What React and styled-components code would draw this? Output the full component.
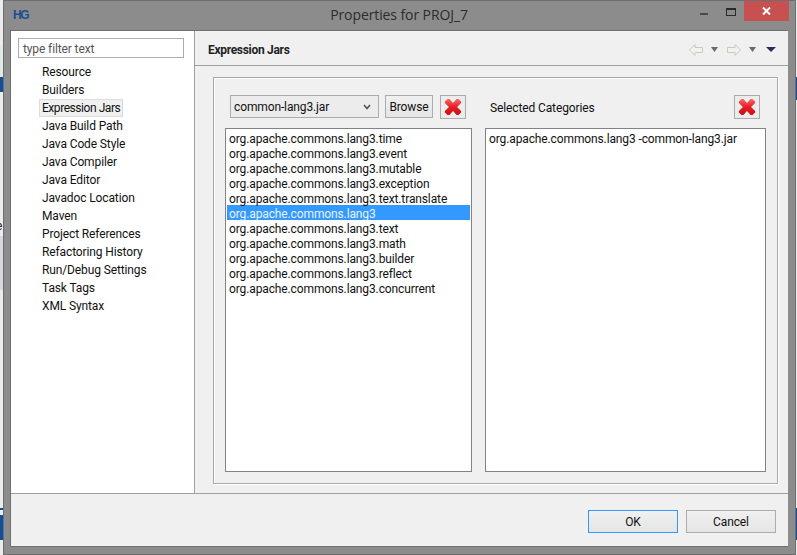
import React from 'react'
import styled, { createGlobalStyle } from 'styled-components'

const GlobalStyle = createGlobalStyle`
  html, body { margin: 0; padding: 0; background: #fff; overflow: hidden; }
  * { box-sizing: border-box; }
`

const Desktop = styled.div`
  position: relative;
  width: 797px;
  height: 555px;
  padding-left: 3px;
  padding-right: 1px;
  background: #ececec;
  font-family: Roboto, "Open Sans", sans-serif;
  font-size: 12px;
  letter-spacing: -0.12px;
  color: #111;
`

const Sliver = styled.div`
  position: absolute;
  left: ${({ $right }) => ($right ? '796px' : '0')};
  top: ${({ $top }) => $top}px;
  width: ${({ $right }) => ($right ? '1px' : '3px')};
  height: ${({ $h }) => $h}px;
  background: ${({ $color }) => $color || '#0f4f9e'};
`

const ClippedChar = styled.span`
  position: absolute;
  left: -4px;
  top: 219px;
  color: #222;
`

const Win = styled.div`
  position: relative;
  height: 555px;
  display: flex;
  flex-direction: column;
  background: #8c8c8c;
  border: 1px solid #6e6e6e;
  padding: 0 7px 7px 6px;
`

const TitleBar = styled.div`
  position: relative;
  height: 29px;
  flex: none;
  display: flex;
  align-items: center;
  justify-content: center;
`

const Logo = styled.span`
  position: absolute;
  left: 3px;
  top: 7px;
  font-family: "Liberation Sans", sans-serif;
  font-size: 12px;
  font-weight: 700;
  letter-spacing: -1.5px;
  color: #1a4f8f;
`

const Title = styled.span`
  font-family: "Open Sans", sans-serif;
  font-size: 14px;
  letter-spacing: -0.1px;
  color: #2c2c2c;
  margin-bottom: 2px;
`

const Controls = styled.div`
  position: absolute;
  right: -1px;
  top: 0;
  display: flex;
  align-items: flex-start;
`

const MinIcon = styled.div`
  width: 8px;
  height: 2px;
  margin-top: 12px;
  margin-right: 18px;
  background: #4a4a4a;
`

const MaxIcon = styled.div`
  width: 10px;
  height: 8px;
  margin-top: 7px;
  margin-right: 8px;
  border: 1px solid #2a2a2a;
  border-top-width: 2px;
`

const CloseBtn = styled.div`
  width: 45px;
  height: 20px;
  background: #c75050;
  display: flex;
  align-items: center;
  justify-content: center;
`

const Client = styled.div`
  flex: 1;
  display: flex;
  flex-direction: column;
  background: #f0f0f0;
  border: 1px solid #6f6f6f;
  border-width: 1px 0 1px 1px;
  min-height: 0;
`

const Main = styled.div`
  height: 463px;
  flex: none;
  display: flex;
  border-bottom: 1px solid #a0a0a0;
`

const Side = styled.div`
  width: 184px;
  flex: none;
  background: #fff;
  border-right: 1px solid #a0a0a0;
  padding: 7px 0 0 7px;
`

const Filter = styled.div`
  width: 166px;
  height: 20px;
  border: 1px solid #acacac;
  color: #555;
  padding-left: 4px;
  line-height: 20px;
  margin-bottom: 5px;
`

const Tree = styled.div`
  display: flex;
  flex-direction: column;
  align-items: flex-start;
  padding-left: 20px;
`

const TreeItem = styled.div`
  height: 18px;
  line-height: 17px;
  margin-left: ${({ $sel }) => ($sel ? '1px' : '0')};
  padding: 0 2px 0 ${({ $sel }) => ($sel ? '2px' : '3px')};
  letter-spacing: ${({ $sel }) => ($sel ? '-0.45px' : 'inherit')};
  border: 1px solid ${({ $sel }) => ($sel ? '#dcdcdc' : 'transparent')};
  background: ${({ $sel }) => ($sel ? '#f0f0f0' : 'transparent')};
`

const Pane = styled.div`
  flex: 1;
  display: flex;
  flex-direction: column;
  min-width: 0;
`

const PaneHead = styled.div`
  height: 35px;
  flex: none;
  display: flex;
  align-items: center;
  justify-content: space-between;
  padding: 3px 12px 0 13px;
  border-bottom: 1px solid #a0a0a0;
`

const PaneTitle = styled.span`
  font-size: 12px;
  font-weight: 700;
  letter-spacing: -0.3px;
  color: #222;
`

const NavIcons = styled.div`
  display: flex;
  align-items: center;
`

const NavGap = styled.span`
  width: 9px;
`

const Body = styled.div`
  flex: 1;
  padding: 11px 10px 10px 18px;
  display: flex;
`

const Group = styled.div`
  flex: 1;
  border: 1px solid #a9a9a9;
  box-shadow: inset 1px 1px 0 #fff, 1px 1px 0 #fff;
  padding: 17px 11px 11px 11px;
  display: grid;
  grid-template-columns: 247px 281px;
  grid-template-rows: 24px 344px;
  column-gap: 13px;
  row-gap: 9px;
`

const Bar = styled.div`
  display: flex;
  align-items: flex-start;
  padding-left: 5px;
  gap: 6px;
`

const Select = styled.div`
  width: 149px;
  height: 23px;
  background: #ececec;
  border: 1px solid #acacac;
  padding: 1px 7px 0 3px;
  display: flex;
  align-items: center;
  justify-content: space-between;
`

const Button = styled.div`
  width: 48px;
  height: 23px;
  padding-top: 1px;
  background: linear-gradient(#f0f0f0, #e5e5e5);
  border: 1px solid #acacac;
  display: flex;
  align-items: center;
  justify-content: center;
`

const IconBtn = styled.div`
  width: 26px;
  height: 24px;
  margin-left: ${({ $auto }) => ($auto ? 'auto' : '1px')};
  margin-right: ${({ $auto }) => ($auto ? '6px' : '0')};
  background: #ececec;
  border: 1px solid #acacac;
  display: flex;
  align-items: center;
  justify-content: center;
`

const BarLabel = styled.span`
  line-height: 26px;
`

const List = styled.div`
  background: #fff;
  border: 1px solid #82828c;
  padding: 1px 1px;
`

const Row = styled.div`
  height: 15px;
  line-height: 18px;
  padding-left: 2px;
  white-space: nowrap;
  background: ${({ $sel }) => ($sel ? '#3399ff' : 'transparent')};
  color: ${({ $sel }) => ($sel ? '#e8f2ff' : '#111')};
`

const Footer = styled.div`
  flex: 1;
  display: flex;
  align-items: flex-start;
  justify-content: flex-end;
  gap: 8px;
  padding: 16px 12px 0 0;
`

const DlgButton = styled.div`
  width: 90px;
  height: 23px;
  background: linear-gradient(#f0f0f0, #e5e5e5);
  border: 1px solid ${({ $primary }) => ($primary ? '#3399ff' : '#acacac')};
  display: flex;
  align-items: center;
  justify-content: center;
`

const RedX = () => (
  <svg width="18" height="18" viewBox="0 0 20 20">
    <defs>
      <linearGradient id="rx" x1="0" y1="0" x2="0" y2="1">
        <stop offset="0" stopColor="#f56a6a" />
        <stop offset="0.5" stopColor="#e81c24" />
        <stop offset="1" stopColor="#c8101a" />
      </linearGradient>
    </defs>
    <path d="M1 4 L4 1 L6 1 L10 5.5 L14 1 L16 1 L19 4 L19 5.5 L14.5 10 L19 14.5 L19 16 L16 19 L14 19 L10 14.5 L6 19 L4 19 L1 16 L1 14.5 L5.5 10 L1 5.5 Z" fill="url(#rx)" />
  </svg>
)

const NavArrow = ({ dir }) => (
  <svg width="14" height="12" viewBox="0 0 14 12" style={{ transform: dir === 'left' ? 'none' : 'scaleX(-1)' }}>
    <path d="M0.5 6 L6 0.5 L6 3.5 L13.5 3.5 L13.5 8.5 L6 8.5 L6 11.5 Z" fill="#f2f2ea" stroke="#c9c9c2" />
  </svg>
)

const Caret = ({ color = '#6a6a6e', w = 7, gap = 0 }) => (
  <svg width={w} height="5" viewBox="0 0 7 5" preserveAspectRatio="none" style={{ marginLeft: gap }}>
    <path d="M0 0 H7 L3.5 5 Z" fill={color} />
  </svg>
)

const tree = ['Resource', 'Builders', 'Expression Jars', 'Java Build Path', 'Java Code Style', 'Java Compiler', 'Java Editor', 'Javadoc Location', 'Maven', 'Project References', 'Refactoring History', 'Run/Debug Settings', 'Task Tags', 'XML Syntax']

const packages = ['time', 'event', 'mutable', 'exception', 'text.translate', '', 'text', 'math', 'builder', 'reflect', 'concurrent']

export default function App() {
  return (
    <Desktop>
      <GlobalStyle />
      <Sliver $top={45} $h={32} $color="#dfe9e6" />
      <Sliver $top={77} $h={15} />
      <Sliver $top={236} $h={54} $color="#d8d8e0" />
      <ClippedChar>e</ClippedChar>
      <Sliver $top={508} $h={2} />
      <Sliver $top={515} $h={25} />
      <Sliver $right $top={77} $h={23} />
      <Sliver $right $top={508} $h={32} />
      <Win>
        <TitleBar>
          <Logo>HG</Logo>
          <Title>Properties for PROJ_7</Title>
          <Controls>
            <MinIcon />
            <MaxIcon />
            <CloseBtn>
              <svg width="9" height="8" viewBox="0 0 9 8">
                <path d="M1 0.5 L8 7.5 M8 0.5 L1 7.5" stroke="#fff" strokeWidth="2" />
              </svg>
            </CloseBtn>
          </Controls>
        </TitleBar>
        <Client>
          <Main>
            <Side>
              <Filter>type filter text</Filter>
              <Tree>
                {tree.map((t) => (
                  <TreeItem key={t} $sel={t === 'Expression Jars'}>{t}</TreeItem>
                ))}
              </Tree>
            </Side>
            <Pane>
              <PaneHead>
                <PaneTitle>Expression Jars</PaneTitle>
                <NavIcons>
                  <NavArrow dir="left" />
                  <Caret gap={8} />
                  <NavGap />
                  <NavArrow dir="right" />
                  <Caret gap={8} />
                  <Caret color="#2f2a5e" w={10} gap={10} />
                </NavIcons>
              </PaneHead>
              <Body>
                <Group>
                  <Bar>
                    <Select>
                      <span>common-lang3.jar</span>
                      <svg width="8" height="6" viewBox="0 0 8 6">
                        <path d="M1 1 L4 4.5 L7 1" fill="none" stroke="#555" strokeWidth="1.6" />
                      </svg>
                    </Select>
                    <Button>Browse</Button>
                    <IconBtn><RedX /></IconBtn>
                  </Bar>
                  <Bar>
                    <BarLabel>Selected Categories</BarLabel>
                    <IconBtn $auto><RedX /></IconBtn>
                  </Bar>
                  <List>
                    {packages.map((p) => (
                      <Row key={p} $sel={p === ''}>
                        {p ? `org.apache.commons.lang3.${p}` : 'org.apache.commons.lang3'}
                      </Row>
                    ))}
                  </List>
                  <List>
                    <Row>org.apache.commons.lang3 -common-lang3.jar</Row>
                  </List>
                </Group>
              </Body>
            </Pane>
          </Main>
          <Footer>
            <DlgButton $primary>OK</DlgButton>
            <DlgButton>Cancel</DlgButton>
          </Footer>
        </Client>
      </Win>
    </Desktop>
  )
}
